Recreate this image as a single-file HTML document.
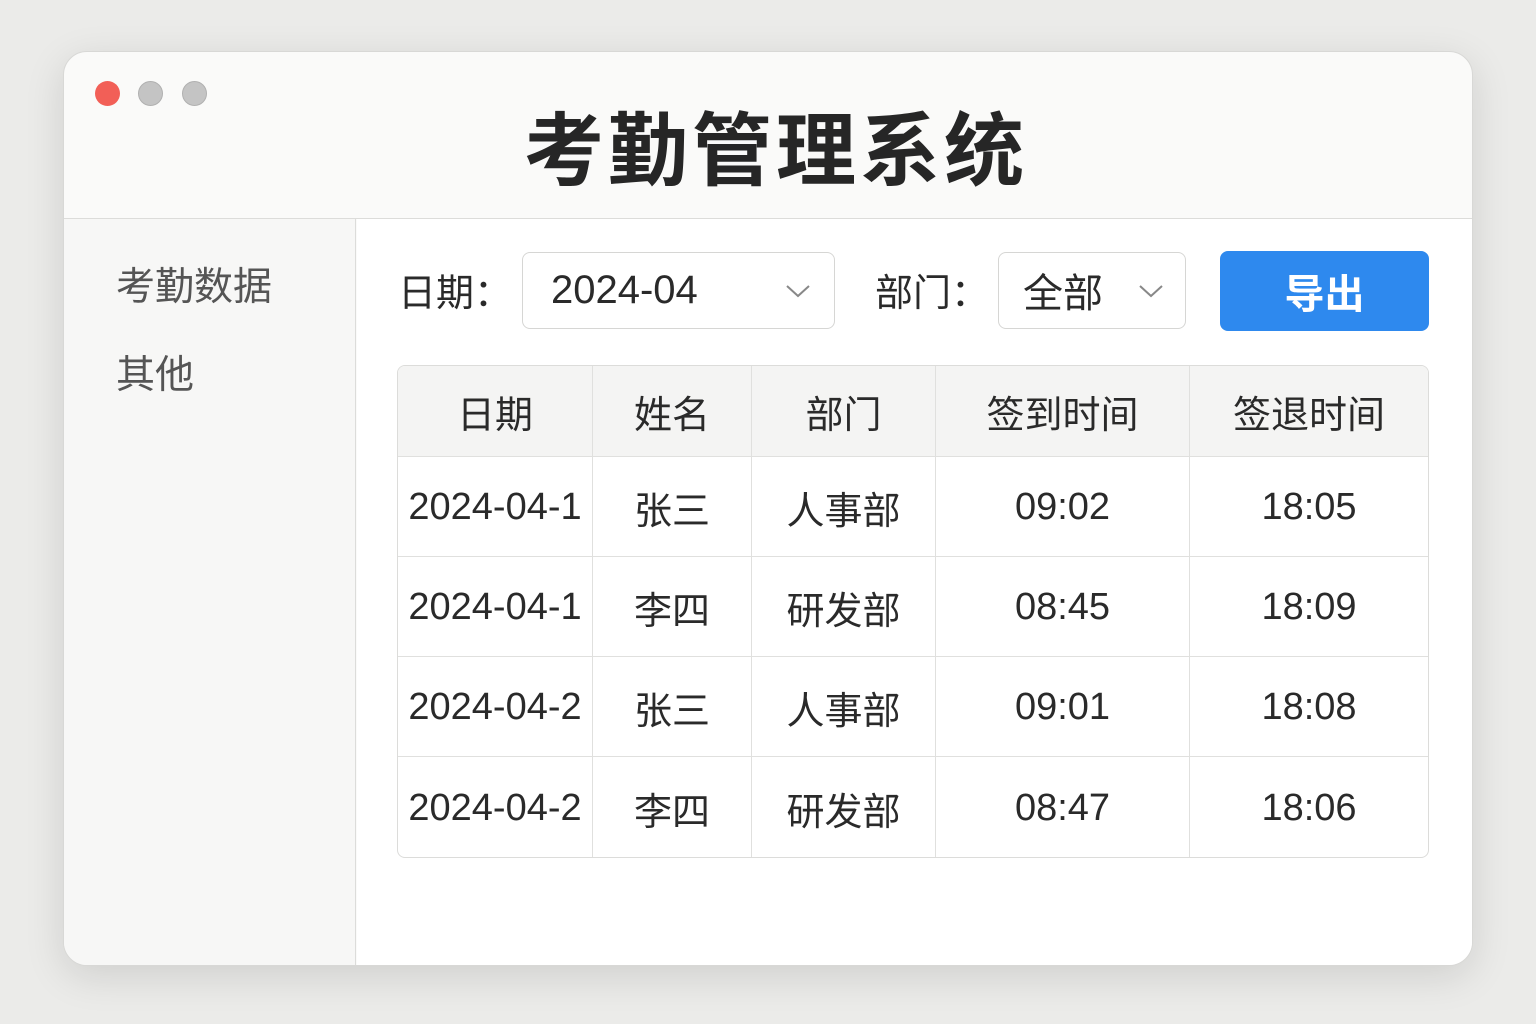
<!DOCTYPE html>
<html><head><meta charset="utf-8"><style>
*{margin:0;padding:0;box-sizing:border-box}
body{width:1536px;height:1024px;background:#ebebe9;position:relative;overflow:hidden;font-family:"Liberation Sans","Noto Sans CJK SC",sans-serif;color:#2a2a2a}
.win{position:absolute;left:63px;top:51px;width:1410px;height:915px;background:#fafaf9;border-radius:24px;border:1px solid #d8d8d6;box-shadow:0 10px 40px rgba(0,0,0,.12);overflow:hidden}
.dot{position:absolute;top:29px;width:25px;height:25px;border-radius:50%}
.title{position:absolute;left:16px;right:0;top:38px;text-align:center;font-size:80px;font-weight:bold;letter-spacing:4px;color:#262626;font-family:"Noto Sans CJK SC",sans-serif;line-height:110px}
.hline{position:absolute;left:0;right:0;top:166px;border-top:1px solid #dcdcda}
.side{position:absolute;left:0;top:167px;width:292px;bottom:0;background:#f7f7f6;border-right:1px solid #dcdcda}
.side div{position:absolute;left:52px;font-size:39px;color:#555;font-family:"Noto Sans CJK SC",sans-serif;line-height:50px}
.main{position:absolute;left:293px;top:167px;right:0;bottom:0;background:#fff}
.lbl{position:absolute;font-size:38px;line-height:50px;font-family:"Noto Sans CJK SC",sans-serif;color:#2a2a2a}
.sel{position:absolute;border:1.5px solid #d6d6d4;border-radius:8px;background:#fff;height:77px}
.sel span{position:absolute;top:12px;font-size:40px;line-height:50px;font-family:"Liberation Sans","Noto Sans CJK SC",sans-serif}
.sel svg{position:absolute;top:30px}
.btn{position:absolute;left:863px;top:32px;width:209px;height:80px;background:#2e89ee;border-radius:8px;color:#fff;font-size:40px;font-weight:bold;text-align:center;line-height:80px;font-family:"Noto Sans CJK SC",sans-serif}
table{position:absolute;left:40px;top:146px;width:1032px;border-collapse:separate;border-spacing:0;border:1.5px solid #dcdcda;border-radius:8px;overflow:hidden}
td,th{border-right:1px solid #e0e0de;border-bottom:1px solid #e0e0de;text-align:center;font-size:38px;font-weight:normal;font-family:"Liberation Sans","Noto Sans CJK SC",sans-serif;color:#2a2a2a}
th{height:91px;background:#f4f4f3;font-family:"Noto Sans CJK SC",sans-serif}
td{height:100px;padding-top:2px}
tr td:last-child,tr th:last-child{border-right:none}
tr:last-child td{border-bottom:none}
</style></head><body>
<div class="win">
<div class="dot" style="left:31px;background:#f25f57"></div>
<div class="dot" style="left:74px;background:#c4c4c4;border:1px solid #b0b0b0"></div>
<div class="dot" style="left:118px;background:#c4c4c4;border:1px solid #b0b0b0"></div>
<div class="title">考勤管理系统</div>
<div class="hline"></div>
<div class="side"><div style="top:40px">考勤数据</div><div style="top:128px">其他</div></div>
<div class="main">
<div class="lbl" style="left:41px;top:46px">日期：</div>
<div class="sel" style="left:165px;top:33px;width:313px"><span style="left:28px">2024-04</span><svg style="left:262px" width="26" height="16"><path d="M2 3 L13 13 L24 3" fill="none" stroke="#888" stroke-width="2"/></svg></div>
<div class="lbl" style="left:518px;top:46px">部门：</div>
<div class="sel" style="left:641px;top:33px;width:188px"><span style="left:24px;font-family:'Noto Sans CJK SC',sans-serif">全部</span><svg style="left:139px" width="26" height="16"><path d="M2 3 L13 13 L24 3" fill="none" stroke="#888" stroke-width="2"/></svg></div>
<div class="btn">导出</div>
<table>
<tr><th style="width:195px">日期</th><th style="width:159px">姓名</th><th style="width:184px">部门</th><th style="width:254px">签到时间</th><th>签退时间</th></tr>
<tr><td>2024-04-1</td><td>张三</td><td>人事部</td><td>09:02</td><td>18:05</td></tr>
<tr><td>2024-04-1</td><td>李四</td><td>研发部</td><td>08:45</td><td>18:09</td></tr>
<tr><td>2024-04-2</td><td>张三</td><td>人事部</td><td>09:01</td><td>18:08</td></tr>
<tr><td>2024-04-2</td><td>李四</td><td>研发部</td><td>08:47</td><td>18:06</td></tr>
</table>
</div>
</div>
</body></html>
